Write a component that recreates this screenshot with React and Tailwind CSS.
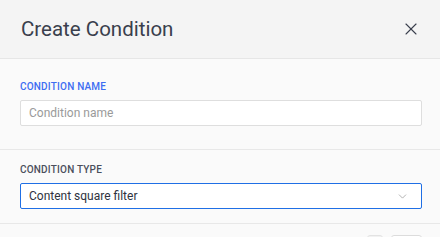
import { X, ChevronDown } from 'lucide-react';

const font = { fontFamily: 'Roboto, "Noto Sans", sans-serif' };

function Field({ label, active, children }) {
  return (
    <div className="flex flex-col gap-[7px]">
      <label
        className={
          'text-[10px] leading-[12px] font-medium uppercase tracking-[0.02em] ' +
          (active ? 'text-[#3d6df2]' : 'text-[#4a4f5c]')
        }
      >
        {label}
      </label>
      {children}
    </div>
  );
}

export default function App() {
  return (
    <div className="w-[440px] h-[237px] overflow-hidden bg-[#fafafa]" style={font}>
      <header className="h-[59px] flex items-center justify-between pl-[21px] pr-[19px] bg-[#f4f4f4] border-b border-[#e6e6e6]">
        <h2 className="text-[20.5px] leading-none font-normal text-[#3a3f4d]">Create Condition</h2>
        <button type="button" className="text-[#3a3f4d]">
          <X size={20} strokeWidth={1.3} />
        </button>
      </header>

      <section className="px-5 pt-[22px] pb-[23px] border-b border-[#e8e8e8]">
        <Field label="Condition name" active>
          <input
            placeholder="Condition name"
            className="h-[26px] w-[402px] px-2 text-[12px] bg-white border border-[#dedede] rounded-[2px] text-[#333] placeholder:text-[#9a9a9a] outline-none"
          />
        </Field>
      </section>

      <section className="px-5 pt-[14px] pb-[14px] border-b border-[#e8e8e8]">
        <Field label="Condition type">
          <div className="h-[26px] w-[402px] flex items-center justify-between pl-2 pr-[12px] bg-white border border-[#1f6fe5] rounded-[2px]">
            <span className="text-[12px] text-[#2f3340]">Content square filter</span>
            <ChevronDown size={13} strokeWidth={1.2} className="text-[#8a8a8a]" />
          </div>
        </Field>
      </section>

      <footer className="flex justify-end gap-2 pr-[18px] pt-[11px]">
        <button type="button" className="h-7 w-[16px] rounded-[3px] border border-[#e3e3e3] bg-[#f2f2f2]" />
        <button type="button" className="h-7 w-[31px] rounded-[3px] border border-[#dcdcdc] bg-white" />
      </footer>
    </div>
  );
}
